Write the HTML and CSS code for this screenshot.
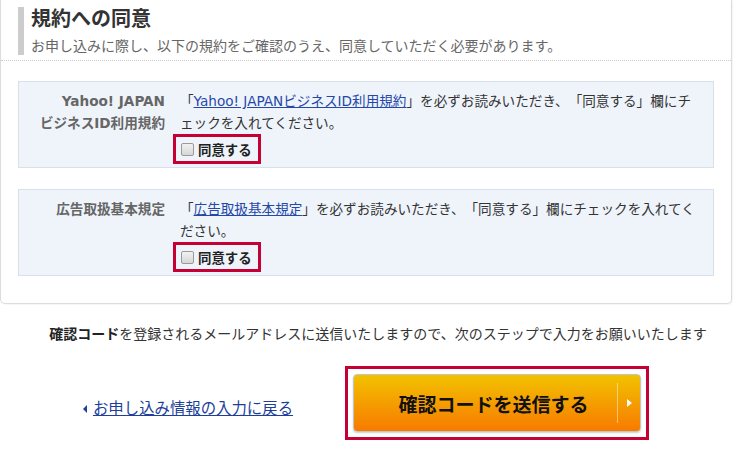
FILE: index.html
```html
<!DOCTYPE html>
<html lang="ja">
<head>
    <meta charset="UTF-8">
    <title>規約への同意</title>
    <link rel="stylesheet" href="styles.css">
</head>
<body>
    <div class="page">
        <div class="card">
            <div class="sec-head">
                <div class="sec-bar">
                    <h2 class="sec-title">規約への同意</h2>
                    <p class="sec-lead">お申し込みに際し、以下の規約をご確認のうえ、同意していただく必要があります。</p>
                </div>
            </div>

            <div class="terms">
                <div class="term-box">
                    <div class="term-label">Yahoo! JAPAN<br>ビジネスID利用規約</div>
                    <div class="term-body">
                        <p class="term-text">「<a href="#" class="term-link">Yahoo! JAPANビジネスID利用規約</a>」を必ずお読みいただき、「同意する」欄にチェックを入れてください。</p>
                        <label class="agree"><input type="checkbox" class="agree-check">同意する</label>
                    </div>
                </div>

                <div class="term-box">
                    <div class="term-label">広告取扱基本規定</div>
                    <div class="term-body">
                        <p class="term-text">「<a href="#" class="term-link">広告取扱基本規定</a>」を必ずお読みいただき、「同意する」欄にチェックを入れてください。</p>
                        <label class="agree"><input type="checkbox" class="agree-check">同意する</label>
                    </div>
                </div>
            </div>
        </div>

        <p class="notice"><strong>確認コード</strong>を登録されるメールアドレスに送信いたしますので、次のステップで入力をお願いいたします</p>

        <div class="actions">
            <a href="#" class="back-link">お申し込み情報の入力に戻る</a>
            <div class="submit-frame">
                <button type="button" class="submit-btn">
                    <span class="submit-label">確認コードを送信する</span>
                    <span class="submit-arrow"></span>
                </button>
            </div>
        </div>
    </div>
</body>
</html>
```

FILE: styles.css
```css
* {
    margin: 0;
    padding: 0;
    box-sizing: border-box;
}

body {
    font-family: "DejaVu Sans", "Noto Sans CJK JP", sans-serif;
    color: #333;
    background: #fff;
    text-spacing-trim: space-all;
}

.page {
    width: 732px;
}

.card {
    background: #fff;
    border: 1px solid #dcdcdc;
    border-top: none;
    border-radius: 0 0 5px 5px;
    box-shadow: 1px 1px 1px rgba(0, 0, 0, 0.04);
    padding-bottom: 27px;
}

/* section heading */
.sec-head {
    padding: 7px 17px 5px;
    border-bottom: 1px dotted #ccc;
}

.sec-bar {
    border-left: 6px solid #ccc;
    padding-left: 7px;
}

.sec-title {
    font-size: 20px;
    line-height: 25px;
    font-weight: bold;
    color: #333;
}

.sec-lead {
    font-size: 14px;
    line-height: 17px;
    margin-top: 6px;
    color: #666;
}

/* terms boxes */
.terms {
    padding: 20px 17px 0;
    display: flex;
    flex-direction: column;
    gap: 21px;
}

.term-box {
    display: flex;
    background: #eff4fb;
    border: 1px solid #d8e0ec;
    padding: 8px 10px 3px 0;
}

.term-label {
    width: 146px;
    flex-shrink: 0;
    text-align: right;
    font-size: 13.6px;
    line-height: 22px;
    font-weight: bold;
    color: #666;
}

.term-body {
    flex: 1;
    margin-left: 15px;
}

.term-text {
    font-size: 13.6px;
    line-height: 22px;
    color: #333;
}

.term-link {
    color: #2447a8;
}

.agree {
    display: inline-flex;
    align-items: center;
    height: 30px;
    margin-left: -7px;
    padding: 0 6px 0 5px;
    border: 3px solid #c40035;
    font-size: 13.4px;
    font-weight: bold;
    color: #222;
}

.agree-check {
    appearance: none;
    width: 13px;
    height: 13px;
    margin-right: 4px;
    border: 1px solid #9a9a9a;
    border-radius: 2px;
    background: linear-gradient(#f2f2f2, #d6d6d6);
}

/* bottom */
.notice {
    margin-top: 20px;
    padding-left: 24px;
    text-align: center;
    font-size: 14px;
    line-height: 20px;
    color: #333;
}

.notice strong {
    color: #222;
}

.actions {
    display: flex;
    justify-content: center;
    align-items: center;
    gap: 52px;
    margin-top: 22px;
}

.back-link {
    display: flex;
    align-items: center;
    gap: 6px;
    margin-top: 12px;
    font-size: 15.4px;
    line-height: 20px;
    color: #1d3f9a;
}

.back-link::before {
    content: "";
    border-style: solid;
    border-width: 4px 4px 4px 0;
    border-color: transparent #1d3f9a transparent transparent;
}

.submit-frame {
    border: 3px solid #c40035;
    padding: 5px;
}

.submit-btn {
    display: flex;
    align-items: center;
    width: 288px;
    height: 58px;
    border: 1px solid #c4c4c4;
    border-radius: 4px;
    background: linear-gradient(#f2c200, #f77a00);
    box-shadow: 0 1px 2px rgba(0, 0, 0, 0.2);
    font-family: "DejaVu Sans", "Noto Sans CJK JP", sans-serif;
    cursor: pointer;
}

.submit-label {
    flex: 1;
    padding-left: 16px;
    text-align: center;
    font-size: 19px;
    font-weight: bold;
    color: #111;
}

.submit-arrow {
    display: flex;
    align-items: center;
    justify-content: center;
    width: 23px;
    height: 40px;
    border-left: 1px solid rgba(255, 255, 255, 0.45);
}

.submit-arrow::after {
    content: "";
    border-style: solid;
    border-width: 4px 0 4px 5px;
    border-color: transparent transparent transparent #fff;
}
```
